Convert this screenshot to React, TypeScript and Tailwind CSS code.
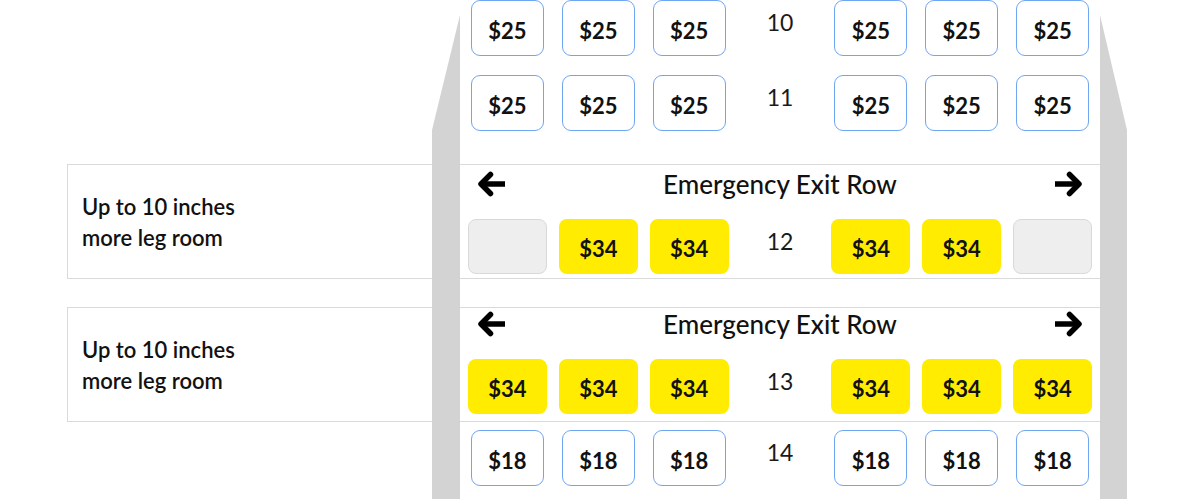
type Seat = { kind: 'std' | 'exit' | 'blocked'; price?: string };

const std = (price: string): Seat => ({ kind: 'std', price });
const exit = (price: string): Seat => ({ kind: 'exit', price });
const blocked: Seat = { kind: 'blocked' };

function Arrow({ dir }: { dir: 'left' | 'right' }) {
  return (
    <svg
      width="32"
      height="26"
      viewBox="0 0 32 26"
      className={dir === 'right' ? 'rotate-180' : ''}
      fill="none"
      stroke="#000"
      strokeWidth="5.5"
      strokeLinejoin="round"
      strokeLinecap="round"
    >
      <path d="M29 13H6" strokeLinecap="butt" />
      <path d="M14.5 3.5L5 13l9.5 9.5" />
    </svg>
  );
}

function SeatBox({ seat }: { seat: Seat }) {
  if (seat.kind === 'blocked') {
    return <div className="w-[79px] h-[55px] rounded-[8px] bg-[#eeeeee] border border-[#d9d9d9]" />;
  }
  if (seat.kind === 'exit') {
    return (
      <button className="w-[79px] h-[55px] rounded-[8px] bg-[#ffec00] flex items-center justify-center pt-[4px] text-[22px] font-bold text-[#111]">
        {seat.price}
      </button>
    );
  }
  return (
    <button className="w-[73px] h-[56px] rounded-[9px] bg-white border border-[#6ea6f2] flex items-center justify-center pt-[4px] text-[22px] font-bold text-[#111]">
      {seat.price}
    </button>
  );
}

function SeatRow({ num, seats }: { num: number; seats: Seat[] }) {
  return (
    <div className="grid grid-cols-7 w-[636px] mx-[2px] items-start">
      {seats.slice(0, 3).map((s, i) => (
        <div key={i} className="flex justify-center">
          <SeatBox seat={s} />
        </div>
      ))}
      <div className="h-[44px] flex items-center justify-center text-[23px] text-[#1a1a1a]">{num}</div>
      {seats.slice(3).map((s, i) => (
        <div key={i} className="flex justify-center">
          <SeatBox seat={s} />
        </div>
      ))}
    </div>
  );
}

function ExitRow({
  num,
  seats,
  className,
  headerTop,
}: {
  num: number;
  seats: Seat[];
  className: string;
  headerTop: string;
}) {
  return (
    <div className={`ml-[67px] w-[1059px] h-[115px] border border-[#dadada] flex ${className}`}>
      <div className="w-[392px] pl-[14px] flex items-center text-[22px] leading-[31px] font-semibold text-[#111]">
        <p>
          Up to 10 inches
          <br />
          more leg room
        </p>
      </div>
      <div className="w-[640px] flex flex-col">
        <div className={`h-[36px] px-[16px] flex items-center justify-between ${headerTop}`}>
          <Arrow dir="left" />
          <span className="text-[26px] font-medium text-[#111]">Emergency Exit Row</span>
          <Arrow dir="right" />
        </div>
        <div className="mt-[17px]">
          <SeatRow num={num} seats={seats} />
        </div>
      </div>
    </div>
  );
}

export default function App() {
  return (
    <div className="relative w-[1200px] h-[499px] overflow-hidden bg-white font-['Lato','Noto_Sans',sans-serif]">
      <div className="flex flex-col">
        <div className="ml-[460px]">
          <SeatRow num={10} seats={[std('$25'), std('$25'), std('$25'), std('$25'), std('$25'), std('$25')]} />
        </div>
        <div className="ml-[460px] mt-[19px]">
          <SeatRow num={11} seats={[std('$25'), std('$25'), std('$25'), std('$25'), std('$25'), std('$25')]} />
        </div>
        <ExitRow
          num={12}
          className="mt-[33px]"
          headerTop="mt-[1px]"
          seats={[blocked, exit('$34'), exit('$34'), exit('$34'), exit('$34'), blocked]}
        />
        <ExitRow
          num={13}
          className="mt-[28px]"
          headerTop="mt-[-2px]"
          seats={[exit('$34'), exit('$34'), exit('$34'), exit('$34'), exit('$34'), exit('$34')]}
        />
        <div className="ml-[460px] mt-[8px]">
          <SeatRow num={14} seats={[std('$18'), std('$18'), std('$18'), std('$18'), std('$18'), std('$18')]} />
        </div>
      </div>

      {/* fuselage walls */}
      <div className="absolute left-[432px] top-[15px] w-[28px] h-[484px] bg-[#d3d3d3] [clip-path:polygon(100%_0,100%_100%,0_100%,0_115px)]" />
      <div className="absolute left-[1100px] top-[15px] w-[27px] h-[484px] bg-[#d3d3d3] [clip-path:polygon(0_0,100%_115px,100%_100%,0_100%)]" />
    </div>
  );
}
